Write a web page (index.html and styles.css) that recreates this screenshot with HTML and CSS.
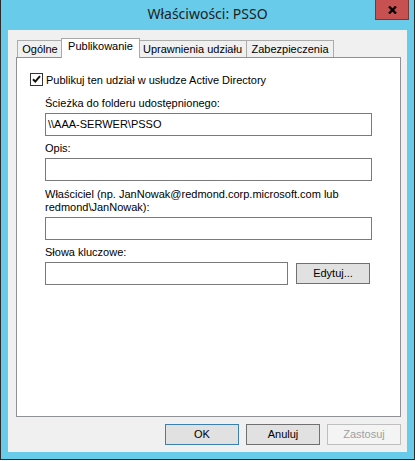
FILE: index.html
```html
<!DOCTYPE html>
<html lang="pl">
<head>
<meta charset="utf-8">
<title>Właściwości: PSSO</title>
<link rel="stylesheet" href="styles.css">
</head>
<body>
<div class="window">
  <div class="titlebar">
    <div></div>
    <div class="title">Właściwości: PSSO</div>
    <div class="close">
      <svg width="9" height="8" viewBox="0 0 9 8"><path d="M1 0.5 L8 7.5 M8 0.5 L1 7.5" stroke="#000" stroke-width="2.3" fill="none"/></svg>
    </div>
  </div>
  <div class="client">
    <div class="tabs">
      <div class="tab t-ogolne">Ogólne</div>
      <div class="tab active t-pub">Publikowanie</div>
      <div class="tab t-upr">Uprawnienia udziału</div>
      <div class="tab t-zab">Zabezpieczenia</div>
    </div>
    <div class="panel">
      <div class="check">
        <span class="box"><svg width="11" height="11" viewBox="0 0 11 11"><path d="M2 5.2 L4.3 7.6 L9 2.2" stroke="#111" stroke-width="2" fill="none"/></svg></span>
        <span>Publikuj ten udział w usłudze Active Directory</span>
      </div>
      <div class="field f-path">
        <div class="lbl">Ścieżka do folderu udostępnionego:</div>
        <div class="input">\\AAA-SERWER\PSSO</div>
      </div>
      <div class="field f-desc">
        <div class="lbl">Opis:</div>
        <div class="input"></div>
      </div>
      <div class="field f-owner">
        <div class="lbl">Właściciel (np. JanNowak@redmond.corp.microsoft.com lub<br>redmond\JanNowak):</div>
        <div class="input"></div>
      </div>
      <div class="field f-keys">
        <div class="lbl">Słowa kluczowe:</div>
        <div class="keys-row">
          <div class="input input-short"></div>
          <div class="btn btn-edit">Edytuj...</div>
        </div>
      </div>
    </div>
    <div class="buttons">
      <div class="btn btn-default">OK</div>
      <div class="btn">Anuluj</div>
      <div class="btn btn-disabled">Zastosuj</div>
    </div>
  </div>
</div>
</body>
</html>
```
FILE: styles.css
```css
html, body {
  margin: 0;
  padding: 0;
  background: #ffffff;
}

body {
  font-family: "Liberation Sans", Arial, sans-serif;
  font-size: 11px;
  color: #000;
}

.window {
  width: 415px;
  height: 460px;
  box-sizing: border-box;
  background: #68cbe9;
  border-left: 1px solid #2b2b2b;
  border-right: 1px solid #2b2b2b;
  border-bottom: 1px solid #2b2b2b;
  padding: 0 7px;
}

.titlebar {
  height: 30px;
  margin: 0 -7px;
  display: grid;
  grid-template-columns: 1fr auto 1fr;
}

.title {
  font-family: "Noto Sans", "Open Sans", sans-serif;
  font-size: 14px;
  color: #1e1e1e;
  line-height: 27px;
  white-space: nowrap;
}

.close {
  justify-self: end;
  align-self: start;
  width: 34px;
  height: 20px;
  margin-right: 5px;
  box-sizing: border-box;
  background: #c75050;
  border: 1px solid #7a3535;
  border-top: none;
  display: flex;
  align-items: center;
  justify-content: center;
  padding-top: 1px;
}

.close svg {
  display: block;
}

.client {
  height: 422px;
  box-sizing: border-box;
  background: #f0f0f0;
  padding: 8px 6px 0 8px;
  display: flex;
  flex-direction: column;
}

.tabs {
  display: flex;
  align-items: flex-end;
  height: 19px;
  padding-left: 1px;
  position: relative;
  z-index: 2;
}

.tab {
  height: 17px;
  box-sizing: border-box;
  border: 1px solid #acacac;
  border-bottom: none;
  background: #f0f0f0;
  text-align: center;
  line-height: 16px;
  white-space: nowrap;
  color: #000;
}

.t-ogolne { width: 46px; }
.t-pub { width: 79px; }
.t-upr { width: 109px; }
.t-zab { width: 88px; margin-left: -1px; }

.tab.active {
  height: 20px;
  background: #ffffff;
  margin: 0 -2px -1px -2px;
  line-height: 15px;
  position: relative;
  z-index: 3;
  border-color: #a9a9a9;
}

.panel {
  height: 360px;
  box-sizing: border-box;
  background: #ffffff;
  border: 1px solid #8e9095;
  padding: 15px 0 0 13px;
  display: flex;
  flex-direction: column;
  position: relative;
  z-index: 1;
}

.check {
  display: flex;
  align-items: center;
  gap: 3px;
  height: 13px;
  white-space: nowrap;
}

.box {
  width: 13px;
  height: 13px;
  box-sizing: border-box;
  border: 1px solid #333333;
  background: #ffffff;
  display: flex;
  align-items: center;
  justify-content: center;
}

.box svg { display: block; }

.field {
  display: flex;
  flex-direction: column;
  gap: 3px;
  margin-left: 15px;
}

.f-path { margin-top: 11px; }
.f-desc { margin-top: 6px; }
.f-owner { margin-top: 7px; }
.f-keys { margin-top: 6px; }

.lbl {
  line-height: 13px;
  white-space: nowrap;
}

.input {
  width: 327px;
  height: 23px;
  box-sizing: border-box;
  border: 1px solid #7a7a7a;
  background: #ffffff;
  padding: 0 2px;
  line-height: 21px;
  white-space: nowrap;
}

.keys-row {
  display: flex;
  align-items: center;
}

.input-short {
  width: 243px;
}

.btn {
  width: 74px;
  height: 21px;
  box-sizing: border-box;
  border: 1px solid #707070;
  background: #e1e1e1;
  text-align: center;
  line-height: 19px;
  color: #000;
}

.btn-edit {
  margin-left: 8px;
}

.buttons {
  display: flex;
  justify-content: flex-end;
  gap: 7px;
  margin-top: 7px;
}

.btn-default {
  border-color: #3c7fb1;
}

.btn-disabled {
  border-color: #bfbfbf;
  background: #f4f4f4;
  color: #a0a0a0;
}
```
